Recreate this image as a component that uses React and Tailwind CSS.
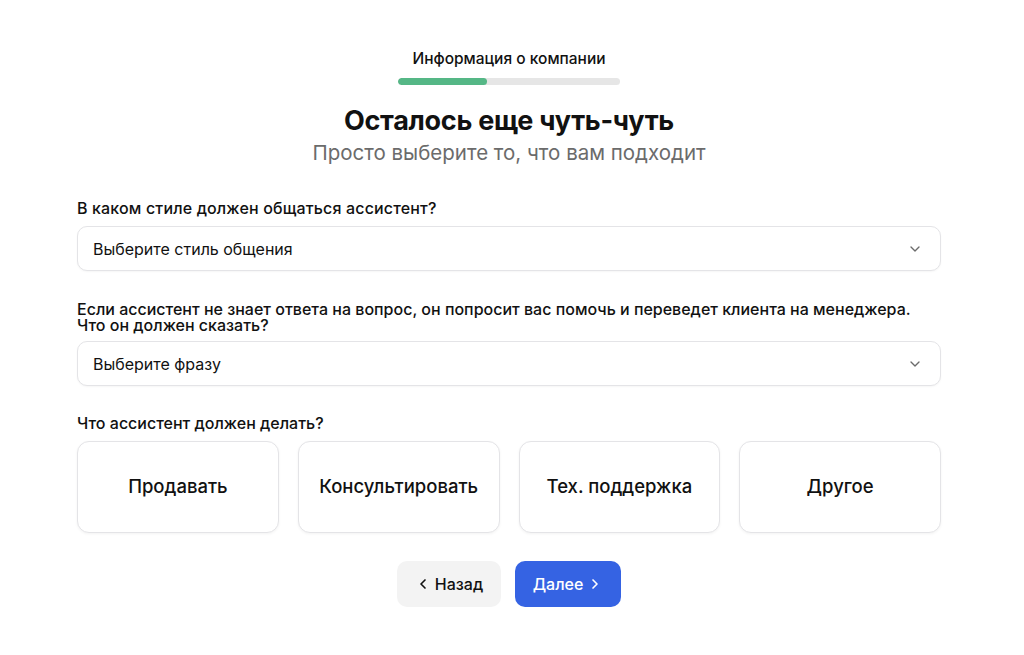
import React, { useState } from "react";
import { ChevronDown, ChevronLeft, ChevronRight } from "lucide-react";

const tasks = ["Продавать", "Консультировать", "Тех. поддержка", "Другое"];

function SelectBox({ placeholder }) {
  return (
    <button className="flex h-[45px] w-full items-center justify-between rounded-[10px] border border-[#e4e4e7] bg-white pl-[15px] pr-[17px] text-left text-[16px] text-[#111] shadow-[0_1px_2px_rgba(0,0,0,0.04)]">
      <span>{placeholder}</span>
      <ChevronDown className="h-4 w-4 text-[#6b6b6b]" strokeWidth={2} />
    </button>
  );
}

export default function App() {
  const [task, setTask] = useState(null);

  return (
    <div
      className="min-h-[655px] w-[1018px] bg-white text-[#111]"
      style={{ fontFamily: "Inter, 'Noto Sans', sans-serif" }}
    >
      <div className="mx-auto flex w-[864px] flex-col pt-[48px]">
        {/* step header */}
        <div className="flex flex-col items-center">
          <div className="text-[15.5px] font-medium leading-[22px]">Информация о компании</div>
          <div className="mt-[8px] h-[7px] w-[222px] overflow-hidden rounded-full bg-[#e6e6e6]">
            <div className="h-full w-[40%] rounded-full bg-[#55b786]" />
          </div>
          <h1 className="mt-[19px] text-[27px] font-bold leading-[34px] tracking-[-0.3px]">
            Осталось еще чуть-чуть
          </h1>
          <p className="mt-[1px] text-[20.5px] leading-[28px] text-[#6b6b6b]">
            Просто выберите то, что вам подходит
          </p>
        </div>

        <div className="mt-[31px] text-[16px] font-medium leading-[20px] tracking-[0.15px]">
          В каком стиле должен общаться ассистент?
        </div>
        <div className="mt-[8px]">
          <SelectBox placeholder="Выберите стиль общения" />
        </div>

        <div className="mt-[30px] text-[16px] font-medium leading-[16px]">
          Если ассистент не знает ответа на вопрос, он попросит вас помочь и переведет клиента на менеджера.
          <br />
          Что он должен сказать?
        </div>
        <div className="mt-[8px]">
          <SelectBox placeholder="Выберите фразу" />
        </div>

        <div className="mt-[27px] text-[16px] font-medium leading-[20px]">Что ассистент должен делать?</div>
        <div className="mt-[8px] grid grid-cols-4 gap-[19px]">
          {tasks.map((t) => (
            <button
              key={t}
              onClick={() => setTask(t)}
              className={
                "flex h-[92px] items-center justify-center rounded-[12px] border bg-white text-[18.5px] font-medium shadow-[0_1px_3px_rgba(0,0,0,0.05)] " +
                (task === t ? "border-[#3563e3]" : "border-[#e4e4e7]")
              }
            >
              {t}
            </button>
          ))}
        </div>

        <div className="mt-[28px] flex justify-center gap-[14px]">
          <button className="flex h-[46px] w-[104px] items-center justify-center gap-[4px] rounded-[10px] bg-[#f3f3f3] text-[16px] font-medium">
            <ChevronLeft className="h-4 w-4" strokeWidth={2.5} />
            Назад
          </button>
          <button className="flex h-[46px] w-[106px] items-center justify-center gap-[4px] rounded-[10px] bg-[#3563e3] text-[16px] font-medium text-white">
            Далее
            <ChevronRight className="h-4 w-4" strokeWidth={2.5} />
          </button>
        </div>
      </div>
    </div>
  );
}
